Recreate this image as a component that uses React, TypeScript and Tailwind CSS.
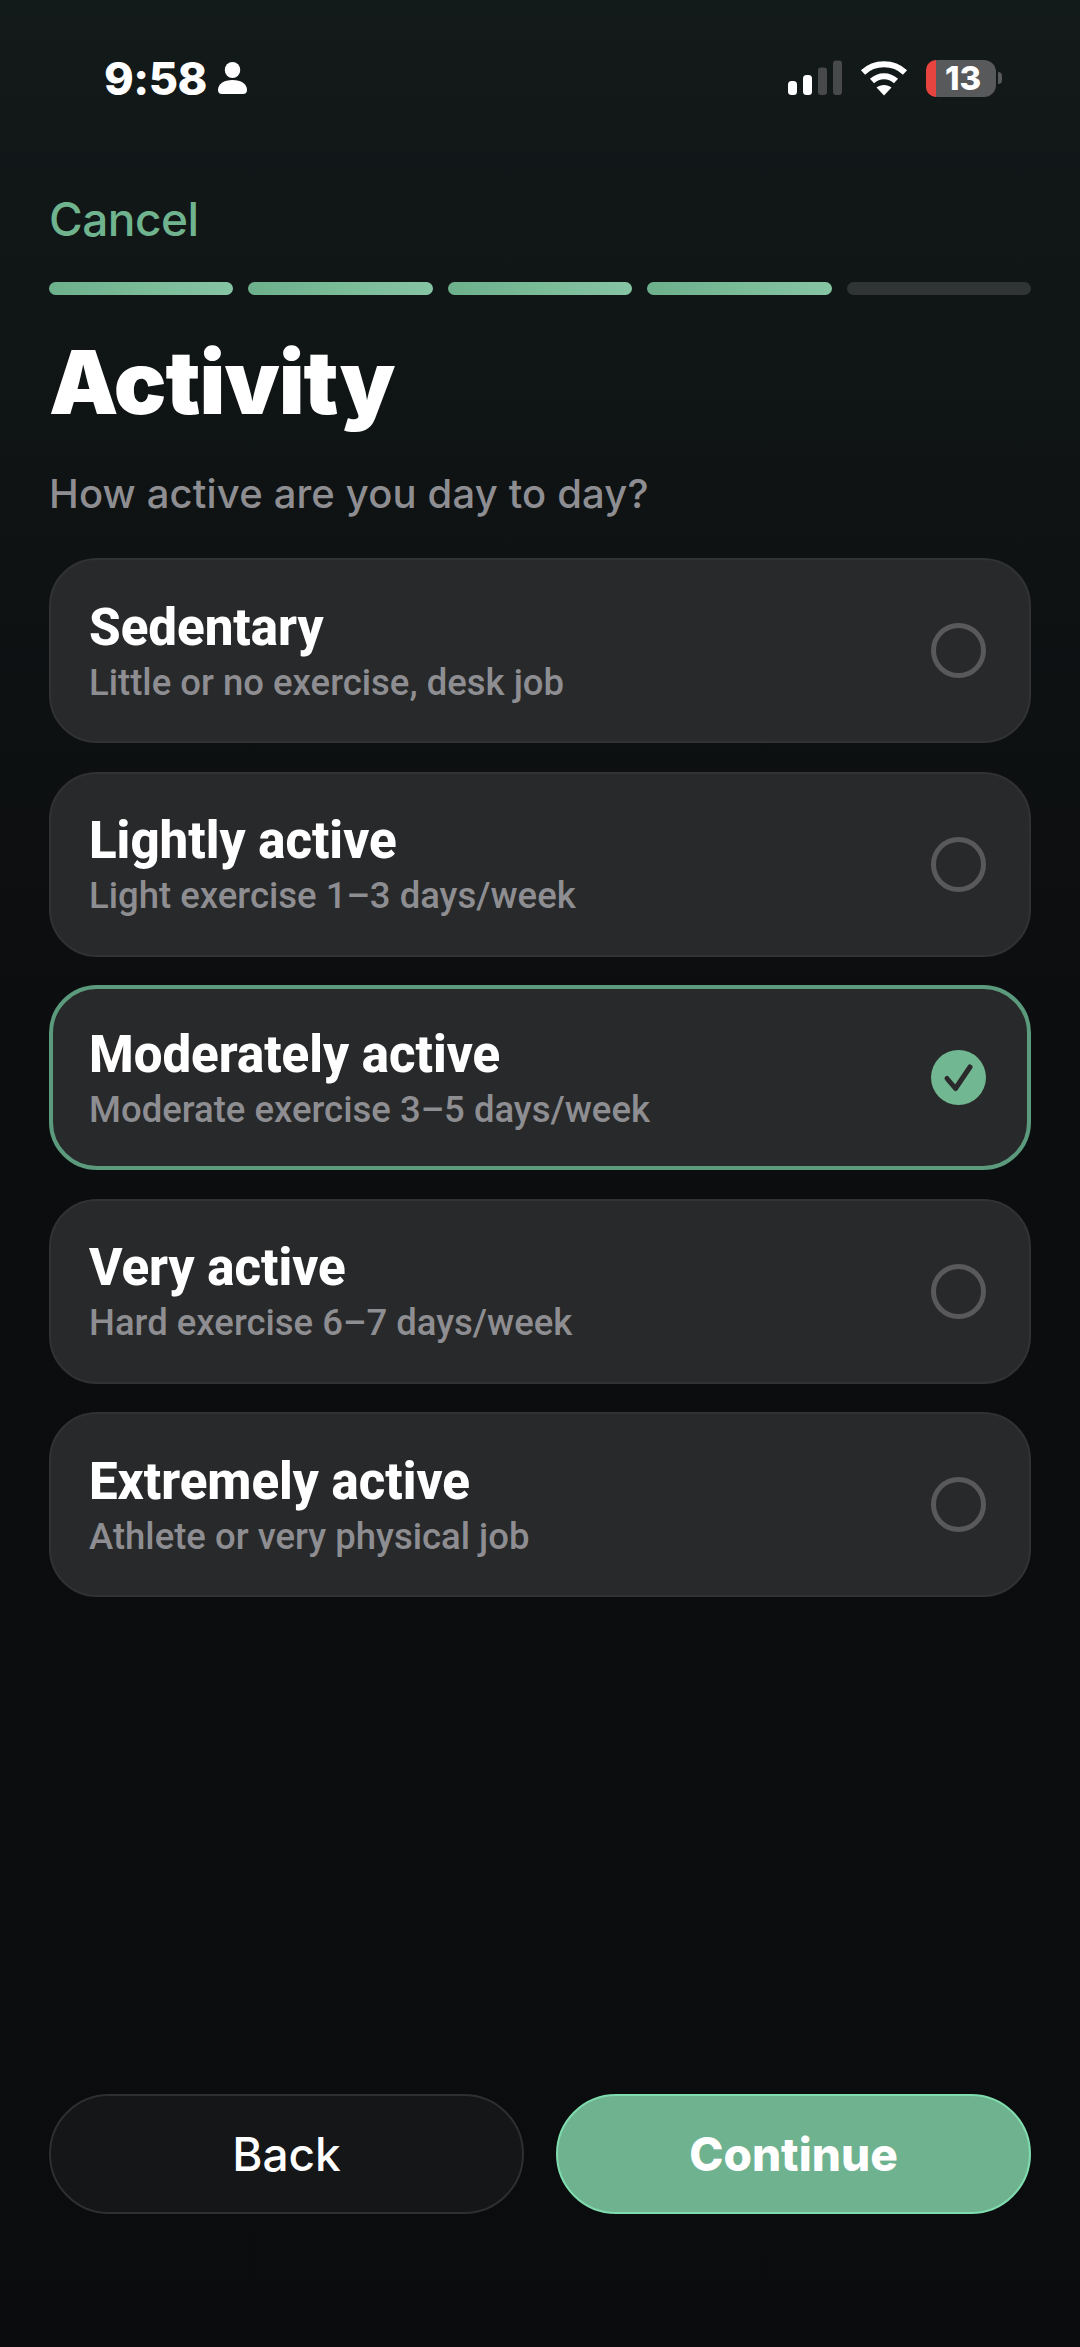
const steps = [true, true, true, true, false];

const options = [
  { title: "Sedentary", sub: "Little or no exercise, desk job", selected: false },
  { title: "Lightly active", sub: "Light exercise 1–3 days/week", selected: false },
  { title: "Moderately active", sub: "Moderate exercise 3–5 days/week", selected: true },
  { title: "Very active", sub: "Hard exercise 6–7 days/week", selected: false },
  { title: "Extremely active", sub: "Athlete or very physical job", selected: false },
];

function StatusBar() {
  return (
    <div className="flex h-[158px] items-center justify-between pb-[2px] pl-[104px] pr-[78px] text-white">
      <div className="flex items-center gap-[11px]">
        <span className="font-['Inter',sans-serif] text-[45px] font-extrabold leading-none tracking-[-0.5px]">9:58</span>
        {/* person */}
        <svg width="29" height="32" viewBox="0 0 30 32" fill="#fff" preserveAspectRatio="none">
          <circle cx="15" cy="8" r="8" />
          <path d="M0 28c0-6 6-10 15-10s15 4 15 10c0 2.500-1.500 4-4 4H4c-2.500 0-4-1.500-4-4z" />
        </svg>
      </div>
      <div className="flex items-center">
        {/* signal */}
        <svg width="54" height="36" viewBox="0 0 54 36" className="mr-[18px]">
          <rect x="0" y="21" width="9" height="14" rx="3.500" fill="#fff" />
          <rect x="15" y="15" width="9" height="20" rx="3.500" fill="#fff" />
          <rect x="30" y="7.500" width="9" height="27.500" rx="3" fill="#47494a" />
          <rect x="45" y="0.500" width="9" height="34.500" rx="3" fill="#47494a" />
        </svg>
        {/* wifi */}
        <svg width="48" height="36" viewBox="0 0 48 36" fill="none" className="mr-[18px]">
          <path d="M3 12.500C14.500 1.500 33.500 1.500 45 12.500" stroke="#fff" strokeWidth="6" />
          <path d="M12 21C19 14.500 29 14.500 36 21" stroke="#fff" strokeWidth="6" />
          <path d="M24 35.500L16.500 27.500C20.500 24 27.500 24 31.500 27.500z" fill="#fff" />
        </svg>
        {/* battery */}
        <div className="flex h-[37px] w-[70px] items-center rounded-[12px] bg-[#58595a]">
          <div className="h-full w-[10px] rounded-l-[12px] bg-[#e8443f]" />
          <span className="flex-1 pr-[6px] text-center font-['Inter',sans-serif] text-[33px] font-extrabold leading-[37px]">13</span>
        </div>
        <div className="ml-[2px] h-[12px] w-[4px] rounded-r-full bg-[#58595a]" />
      </div>
    </div>
  );
}

function Radio({ selected }: { selected: boolean }) {
  if (selected) {
    return (
      <div className="flex h-[55px] w-[55px] items-center justify-center rounded-full bg-[#71b791]">
        <svg width="55" height="55" viewBox="0 0 55 55" fill="none">
          <path d="M16 28.500L24.500 38.500L39 17" stroke="#2a2a2c" strokeWidth="5" strokeLinecap="round" strokeLinejoin="round" />
        </svg>
      </div>
    );
  }
  return <div className="h-[55px] w-[55px] rounded-full border-[5px] border-[#59595b]" />;
}

function OptionCard({ title, sub, selected }: { title: string; sub: string; selected: boolean }) {
  return (
    <div
      className={
        selected
          ? "flex h-[185px] items-center justify-between rounded-[48px] border-[4px] border-[#5b9a7c] bg-[#28292a] pl-[36px] pr-[41px]"
          : "flex h-[185px] items-center justify-between rounded-[48px] border-[2px] border-[#313233] bg-[#28292a] pl-[38px] pr-[43px]"
      }
    >
      <div className="flex flex-col pt-[3px] font-['Roboto',sans-serif]">
        <span className="text-[51px] font-extrabold leading-[58px] text-white">{title}</span>
        <span className="mt-[3px] text-[36.500px] font-medium leading-[46px] text-[#8e8e92]">{sub}</span>
      </div>
      <Radio selected={selected} />
    </div>
  );
}

export default function App() {
  return (
    <div className="flex h-[2347px] w-[1080px] flex-col overflow-hidden bg-[linear-gradient(180deg,#131a1a_0%,#0f1314_20%,#0c0d0f_45%,#0b0c0e_100%)]">
      <StatusBar />
      <div className="flex flex-1 flex-col px-[49px]">
        <div className="h-[124px] pt-[36px] font-['Inter',sans-serif] text-[46px] font-medium leading-[50px] tracking-[-0.5px] text-[#6fb48f]">Cancel</div>

        <div className="flex gap-[15px]">
          {steps.map((done, i) => (
            <div
              key={i}
              className={
                done
                  ? "h-[13px] flex-1 rounded-full bg-gradient-to-r from-[#6db08c] to-[#86c5a3]"
                  : "h-[13px] flex-1 rounded-full bg-[#303435]"
              }
            />
          ))}
        </div>

        <h1 className="mt-[37px] font-['Inter',sans-serif] text-[87.500px] font-black leading-[100px] tracking-[-1px] text-white">Activity</h1>
        <p className="mt-[38px] font-['Inter',sans-serif] text-[40px] font-medium leading-[48px] tracking-[0.15px] text-[#8e8e92]">How active are you day to day?</p>

        <div className="mt-[40px] flex flex-col gap-[28.500px]">
          {options.map((o) => (
            <OptionCard key={o.title} title={o.title} sub={o.sub} selected={o.selected} />
          ))}
        </div>

        <div className="mt-auto mb-[133px] flex gap-[32px]">
          <button className="h-[120px] flex-1 rounded-[60px] border-[2px] border-[#2e2f31] bg-[#141618] font-['Inter',sans-serif] text-[46px] font-medium text-white">
            Back
          </button>
          <button className="h-[120px] flex-1 rounded-[60px] border-[2px] border-[#7fdcae] bg-[#6fb28f] font-['Inter',sans-serif] text-[46px] font-extrabold text-white">
            Continue
          </button>
        </div>
      </div>
    </div>
  );
}
